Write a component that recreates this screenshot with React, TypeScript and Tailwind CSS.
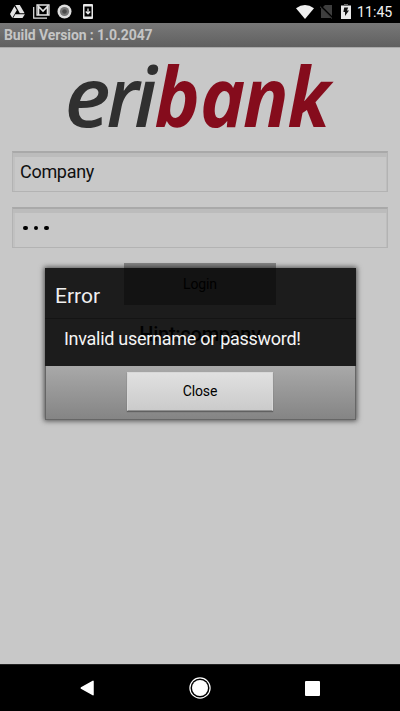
import React from "react";

const letters = [
  { ch: "e", x: 64.5, sx: 1.05 },
  { ch: "r", x: 106.5, sx: 0.96 },
  { ch: "i", x: 134, sx: 1 },
  { ch: "b", x: 154.5, sx: 0.92 },
  { ch: "a", x: 200, sx: 0.92 },
  { ch: "n", x: 243, sx: 0.91 },
  { ch: "k", x: 287.5, sx: 0.9 },
];

function Logo() {
  return (
    <svg className="block h-[103px] w-[400px] shrink-0 overflow-visible" viewBox="0 48 400 103" role="img" aria-label="eribank">
      {letters.map((l, i) => (
        <text
          key={l.ch}
          transform={`translate(${l.x} 127) scale(${l.sx} 1)`}
          className={"font-['Open_Sans',sans-serif] text-[83px] italic " + (i < 3 ? "fill-[#303030] font-semibold" : "fill-[#850c1c] font-bold")}
        >
          {l.ch}
        </text>
      ))}
    </svg>
  );
}

function StatusBar() {
  return (
    <header className="flex h-[23px] shrink-0 items-center bg-black pl-[10px] pr-[7px]">
      <svg className="h-[14px] w-[15px]" viewBox="0 0 15 14" fill="#e4e4e4">
        <path d="M5.2 0h4.6l4.8 8.3h-4.8z" />
        <path d="M4.4 1.2 6.8 5.2 2.3 13 0 9z" />
        <path d="M5.3 9.3h9.6L12.5 13H3.2z" />
      </svg>
      <svg className="ml-2 h-[15px] w-[17px]" viewBox="0 0 17 15" fill="none" stroke="#e4e4e4">
        <path d="M.7 3v11.2H14" strokeWidth="1.2" />
        <path d="M4 1h12v10H4z" strokeWidth="1.3" />
        <path d="M5.5 11V2.5L10 7l4.500-4.500V11" strokeWidth="1.6" />
      </svg>
      <svg className="ml-[7px] h-[15px] w-[15px]" viewBox="0 0 15 15">
        <circle cx="7.5" cy="7.5" r="7" fill="#dedede" />
        <circle cx="7.5" cy="7.5" r="4.6" fill="#777" />
        <circle cx="7.5" cy="7.5" r="2.3" fill="#4a4a4a" />
      </svg>
      <svg className="ml-[11px] h-[15px] w-[10px]" viewBox="0 0 10 15">
        <rect width="10" height="15" rx="1" fill="#e8e8e8" />
        <path d="M1.5 2.5h7v10h-7z" fill="#000" />
        <path d="M5 4.500v5M2.8 7.5 5 9.8l2.2-2.3" stroke="#e8e8e8" strokeWidth="1.3" fill="none" />
      </svg>
      <svg className="ml-auto h-[14px] w-[18px]" viewBox="0 0 18 14">
        <path d="M0 3.2Q9-3 18 3.2L9 14z" fill="#f0f0f0" />
      </svg>
      <svg className="ml-[6px] h-[15px] w-[13px]" viewBox="0 0 13 15">
        <path d="M5 1h7v13H1V5z" fill="#3e3e3e" />
        <path d="M.5 2 12.5 14" stroke="#000" strokeWidth="2" />
        <path d="M0 2.7 12 14.5" stroke="#4c4c4c" />
      </svg>
      <svg className="ml-2 h-[15px] w-[10px]" viewBox="0 0 10 15">
        <path d="M3 0h4v1.5h3V15H0V1.5h3z" fill="#e8e8e8" />
        <path d="M3 0h4v2H3z" fill="#666" />
        <path d="M3.2 3.5h4L6 6.5h2L4 12V8H2.400z" fill="#111" />
      </svg>
      <span className="ml-[6px] mt-px w-[36px] whitespace-nowrap text-[14.2px] leading-none text-[#f0f0f0]">11:45</span>
    </header>
  );
}

function Field({ children }: { children: React.ReactNode }) {
  return (
    <div className="mx-3 flex h-[41px] shrink-0 items-center border border-t-2 border-[#b3b3b3] border-t-[#a9a9a9] pl-[7px] shadow-[inset_0_4px_0_#bcbcbc,inset_2px_0_0_#c1c1c1,inset_-1px_0_0_#bebebe]">
      {children}
    </div>
  );
}

function ErrorDialog() {
  return (
    <section
      role="alertdialog"
      className="absolute left-[45px] top-[268px] flex h-[152px] w-[311px] flex-col shadow-[0_0_5px_1px_rgba(0,0,0,0.6)]"
    >
      <div className="flex h-[98px] flex-col bg-black/86 text-white">
        <h1 className="h-[51px] border-b border-[#141414] pl-[10px] pt-[16px] text-[21px] leading-[25px] text-[#f0f0f0]">Error</h1>
        <p className="whitespace-nowrap pl-[19px] pt-[8px] text-[18px] leading-[24px] tracking-[-0.28px] text-[#f5f5f5]">Invalid username or password!</p>
      </div>
      <div className="flex h-[54px] border border-t-0 border-[#666] bg-linear-to-b from-[#a9a9a9] to-[#858585] pl-[81px] pt-[6px]">
        <button className="h-[39px] w-[146px] border border-[#d8d8d8] border-b-[#909090] bg-linear-to-b from-[#e0e0e0] to-[#cbcbcb] text-[14px] tracking-[-0.1px] text-black shadow-[0_1px_1px_rgba(70,70,70,0.6)]">
          Close
        </button>
      </div>
    </section>
  );
}

export default function App() {
  return (
    <main className="relative flex h-[711px] w-[400px] flex-col overflow-hidden bg-[#c8c8c8] font-[Roboto,sans-serif]">
      <StatusBar />
      <div className="flex h-[25px] shrink-0 items-center border-b border-[#aaa] bg-linear-to-b from-[#787878] to-[#606060] pl-1 pt-px text-[14px] font-bold tracking-[-0.1px] text-[#c5c5c5]">
        Build Version : 1.0.2047
      </div>
      <Logo />
      <Field>
        <span className="text-[18px] leading-none tracking-[-0.3px] text-[#101010]">Company</span>
      </Field>
      <div className="h-[15px] shrink-0" />
      <Field>
        <span className="flex gap-[6px] pl-[3px]">
          <i className="size-[4.5px] rounded-full bg-black" />
          <i className="size-[4.5px] rounded-full bg-black" />
          <i className="size-[4.5px] rounded-full bg-black" />
        </span>
      </Field>
      <button className="mt-[15px] h-[42px] w-[152px] shrink-0 self-center bg-[#858585] text-[14px] tracking-[-0.1px] text-black">Login</button>
      <p className="mt-[16px] text-center text-[20px] font-medium leading-[26px] tracking-[-0.25px] text-black">Hint:company</p>
      <ErrorDialog />
      <nav className="mt-auto flex h-[47px] shrink-0 items-center border-t border-[#222] bg-black pl-[80px]">
        <svg className="h-4 w-[14px]" viewBox="0 0 14 16">
          <path d="M13 1.3v13.4L1.3 8z" fill="#fff" stroke="#fff" strokeWidth="1.5" strokeLinejoin="round" />
        </svg>
        <svg className="ml-[95px] h-[22px] w-[22px]" viewBox="0 0 22 22">
          <circle cx="11" cy="11" r="10.1" fill="none" stroke="#fff" strokeWidth="1.2" />
          <circle cx="11" cy="11" r="8" fill="#fff" />
        </svg>
        <i className="ml-[94px] size-[15px] rounded-[1px] bg-white" />
      </nav>
    </main>
  );
}
